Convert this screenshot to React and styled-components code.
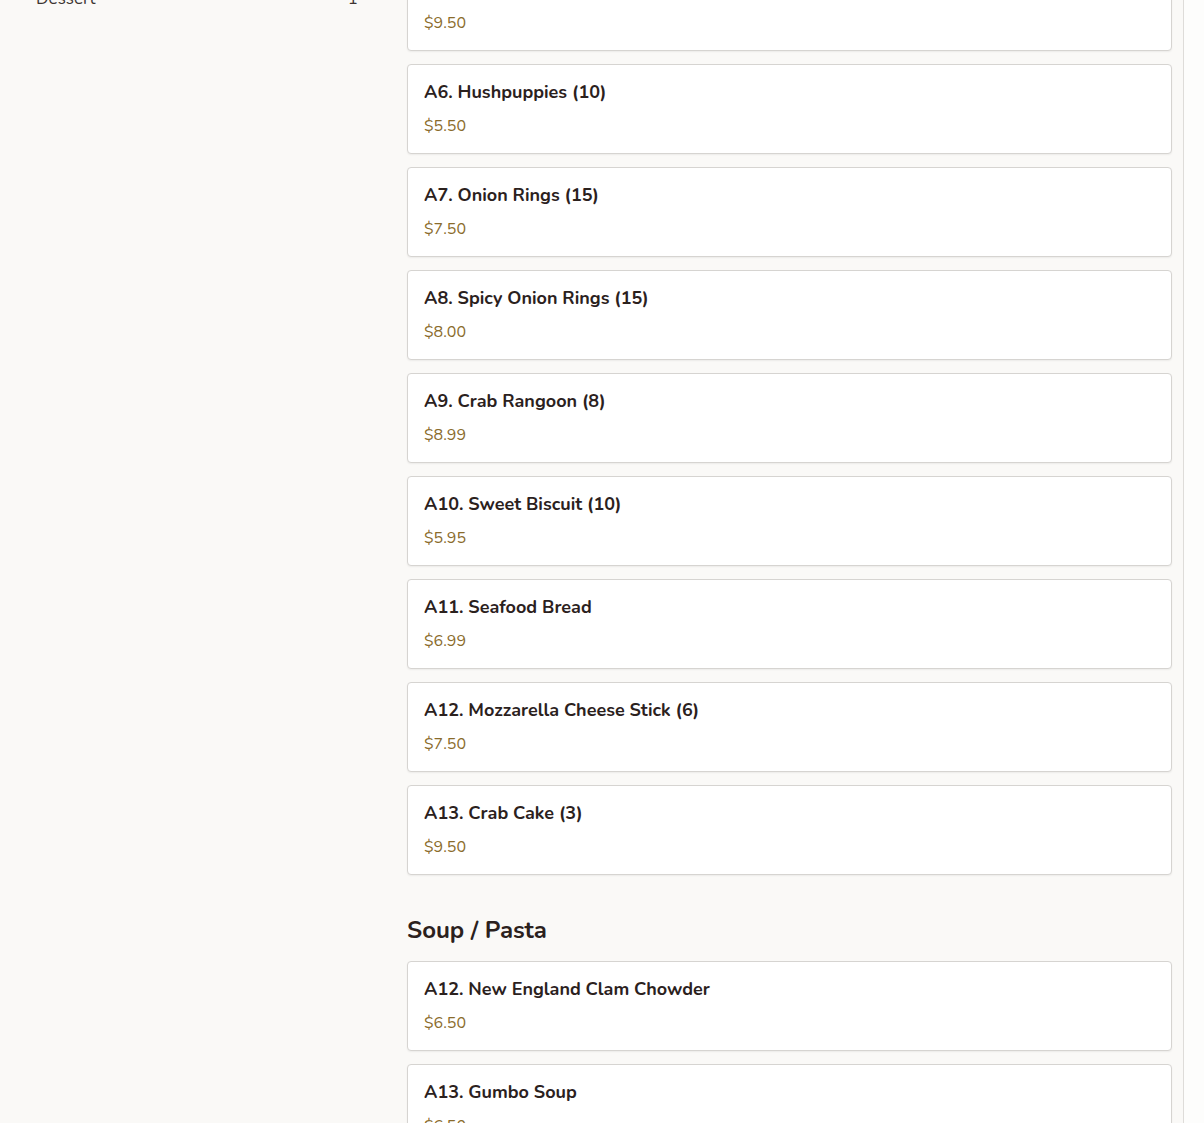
import React from "react";
import styled, { createGlobalStyle } from "styled-components";

const GlobalStyle = createGlobalStyle`
  html, body {
    margin: 0;
    padding: 0;
    background: #faf9f7;
    overflow: hidden;
  }
  body {
    font-family: "Nunito", Lato, "Noto Sans", sans-serif;
    color: #2b211d;
  }
  * { box-sizing: border-box; }
`;

const Frame = styled.div`
  display: flex;
  width: 1204px;
  height: 1123px;
  overflow: hidden;
`;

const Page = styled.div`
  flex: 1;
  background: #faf9f7;
  border-right: 1px solid #dedcd9;
`;

const ScrollTrack = styled.div`
  width: 20px;
  background: #fdfdfc;
`;

const Layout = styled.div`
  display: flex;
  gap: 47px;
  padding: 0 11px 0 36px;
  margin-top: -39px;
`;

const Sidebar = styled.aside`
  width: 324px;
  flex-shrink: 0;
  padding-top: 26px;
`;

const CategoryRow = styled.div`
  display: flex;
  justify-content: space-between;
  align-items: center;
  font-size: 17px;
  line-height: 24px;
  color: #3d3532;
  padding-right: 2px;
`;

const Main = styled.main`
  flex: 1;
  display: flex;
  flex-direction: column;
`;

const Section = styled.section`
  display: flex;
  flex-direction: column;
  gap: 13px;
  & + & {
    margin-top: 39px;
  }
`;

const SectionTitle = styled.h2`
  margin: 0 0 2px;
  font-size: 24px;
  line-height: 32px;
  font-weight: 700;
  color: #2b211d;
`;

const Card = styled.div`
  background: #fff;
  border: 1px solid #d6d4d1;
  border-radius: 4px;
  box-shadow: 0 1px 2px rgba(0, 0, 0, 0.06);
  padding: 16px 16px 17px;
`;

const ItemName = styled.div`
  font-size: 18px;
  line-height: 22px;
  font-weight: 700;
  color: #2b211d;
`;

const ItemPrice = styled.div`
  margin-top: 13px;
  font-size: 16px;
  line-height: 20px;
  color: #8a6b2b;
`;

const appetizers = [
  ["A5. Fried Calamari (12)", "$9.50"],
  ["A6. Hushpuppies (10)", "$5.50"],
  ["A7. Onion Rings (15)", "$7.50"],
  ["A8. Spicy Onion Rings (15)", "$8.00"],
  ["A9. Crab Rangoon (8)", "$8.99"],
  ["A10. Sweet Biscuit (10)", "$5.95"],
  ["A11. Seafood Bread", "$6.99"],
  ["A12. Mozzarella Cheese Stick (6)", "$7.50"],
  ["A13. Crab Cake (3)", "$9.50"],
];

const soups = [
  ["A12. New England Clam Chowder", "$6.50"],
  ["A13. Gumbo Soup", "$6.50"],
];

const MenuItem = ({ name, price }) => (
  <Card>
    <ItemName>{name}</ItemName>
    <ItemPrice>{price}</ItemPrice>
  </Card>
);

export default function App() {
  return (
    <Frame>
      <GlobalStyle />
      <Page>
        <Layout>
          <Sidebar>
            <CategoryRow>
              <span>Dessert</span>
              <span>1</span>
            </CategoryRow>
          </Sidebar>
          <Main>
            <Section>
              {appetizers.map(([n, p]) => (
                <MenuItem key={n} name={n} price={p} />
              ))}
            </Section>
            <Section>
              <SectionTitle>Soup / Pasta</SectionTitle>
              {soups.map(([n, p]) => (
                <MenuItem key={n} name={n} price={p} />
              ))}
            </Section>
          </Main>
        </Layout>
      </Page>
      <ScrollTrack />
    </Frame>
  );
}
